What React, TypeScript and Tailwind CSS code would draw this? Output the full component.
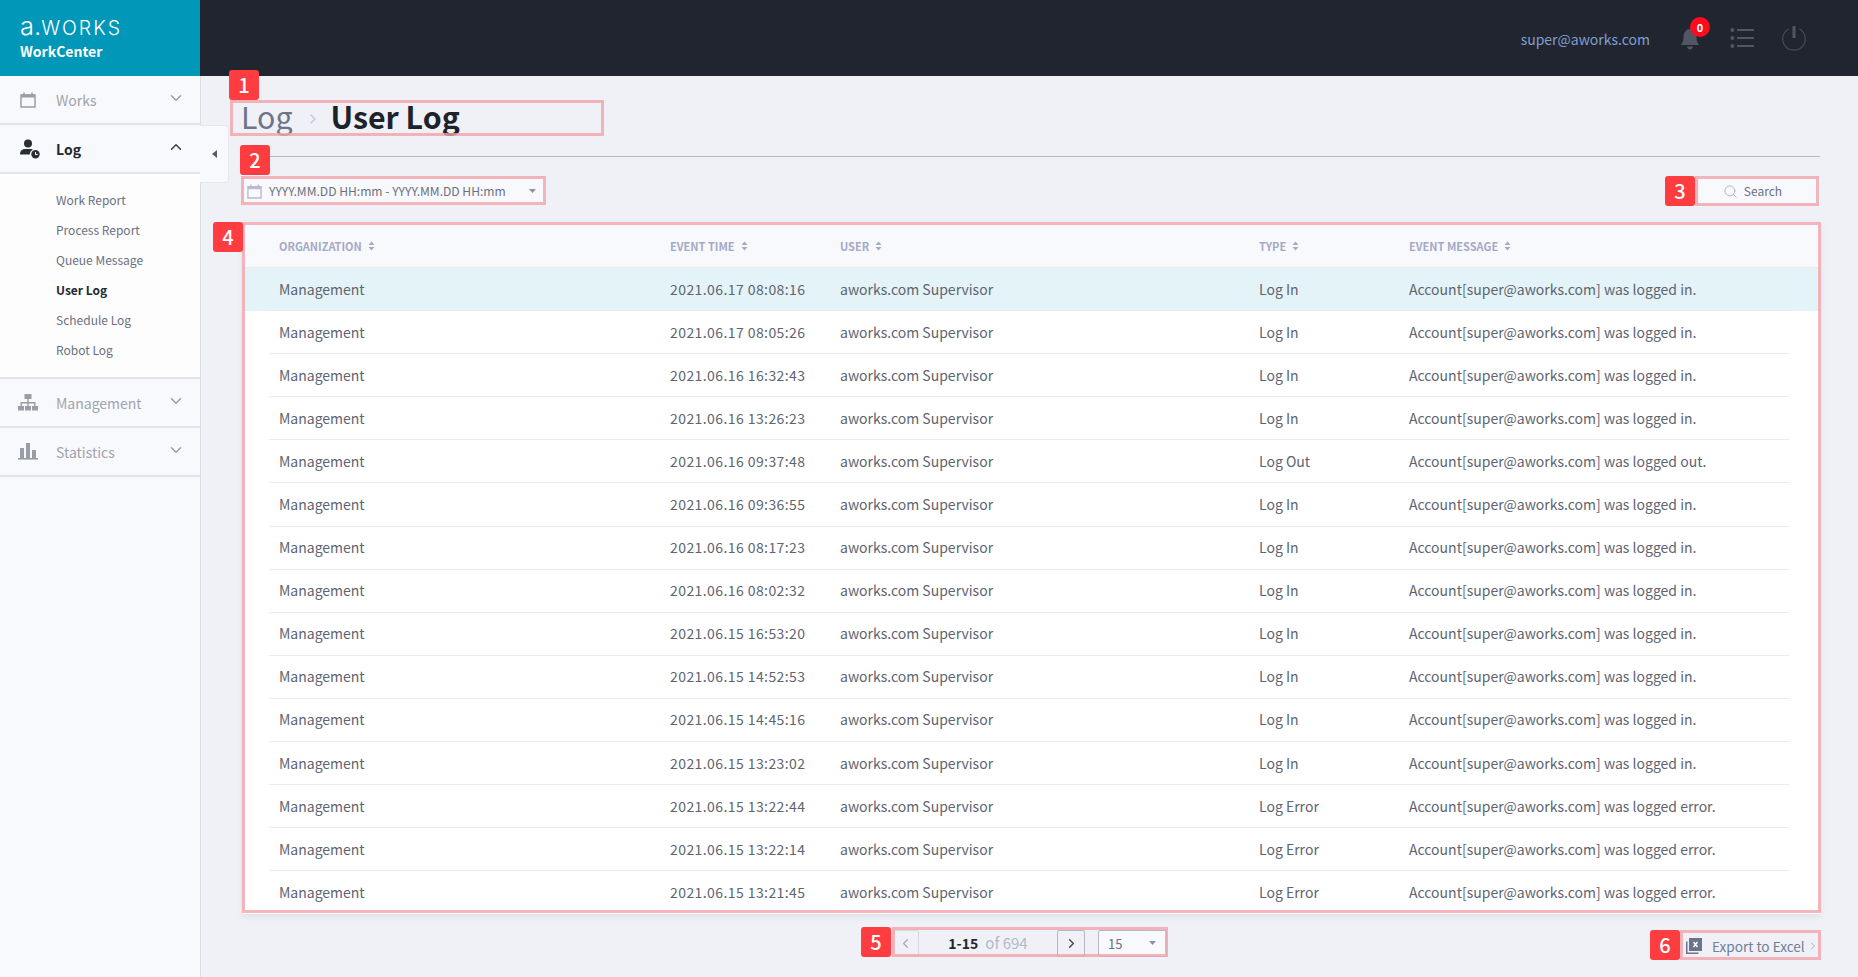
import React from "react";
import { ChevronDown, ChevronUp, ChevronLeft, ChevronRight, Search } from "lucide-react";

const FONT = '"Noto Sans CJK KR", "Noto Sans", sans-serif';

const rows: [string, string, string][] = [
  ["2021.06.17 08:08:16", "Log In", "logged in."],
  ["2021.06.17 08:05:26", "Log In", "logged in."],
  ["2021.06.16 16:32:43", "Log In", "logged in."],
  ["2021.06.16 13:26:23", "Log In", "logged in."],
  ["2021.06.16 09:37:48", "Log Out", "logged out."],
  ["2021.06.16 09:36:55", "Log In", "logged in."],
  ["2021.06.16 08:17:23", "Log In", "logged in."],
  ["2021.06.16 08:02:32", "Log In", "logged in."],
  ["2021.06.15 16:53:20", "Log In", "logged in."],
  ["2021.06.15 14:52:53", "Log In", "logged in."],
  ["2021.06.15 14:45:16", "Log In", "logged in."],
  ["2021.06.15 13:23:02", "Log In", "logged in."],
  ["2021.06.15 13:22:44", "Log Error", "logged error."],
  ["2021.06.15 13:22:14", "Log Error", "logged error."],
  ["2021.06.15 13:21:45", "Log Error", "logged error."],
];

const Sort = () => (
  <svg width="7" height="10" viewBox="0 0 7 10" className="ml-[6px]" fill="#a4a9c6">
    <path d="M3.5 0.5 6.5 4H0.5z" />
    <path d="M3.5 9.5 0.5 6H6.5z" />
  </svg>
);

const CalendarIcon = ({ color, size }: { color: string; size: number }) => (
  <svg width={size} height={size} viewBox="0 0 16 16" fill="none">
    <path d="M1 3h14v12H1z" stroke={color} strokeWidth="1.5" />
    <path d="M1 2.5h14v3H1z" fill={color} />
    <path d="M4 0.5v3M12 0.5v3" stroke={color} strokeWidth="1.5" />
  </svg>
);

const UserClock = () => (
  <svg width="20" height="20" viewBox="0 0 20 20" className="ml-[5px]">
    <circle cx="8" cy="4.6" r="4" fill="#2a2e38" />
    <path d="M0 15.5c0-4 2.500-5.500 5-5.500h6c1 0 1.500.2 2 .5-2 1-3.200 2.800-3.200 5z" fill="#2a2e38" />
    <circle cx="15.500" cy="15.200" r="4.200" fill="#2a2e38" />
    <path d="M15.500 13v2.500h2.200" stroke="#fff" strokeWidth="1" fill="none" />
  </svg>
);

const SitemapIcon = () => (
  <svg width="20" height="17" viewBox="0 0 20 17" fill="#9a9ca6">
    <rect x="6.500" y="0" width="7" height="5" />
    <rect x="0" y="12" width="6" height="4.500" />
    <rect x="7" y="12" width="6" height="4.500" />
    <rect x="14" y="12" width="6" height="4.500" />
    <path d="M9.300 5h1.400v3h6.800v4h-1.400V9.400h-5.400V12H9.300V9.400H3.900V12H2.500V8h6.800z" />
  </svg>
);

const BarsIcon = () => (
  <svg width="20" height="17" viewBox="0 0 20 17" fill="#9a9ca6">
    <rect x="2" y="5" width="4" height="10" />
    <rect x="8" y="0" width="4" height="15" />
    <rect x="14" y="7" width="4" height="8" />
    <rect x="0" y="15" width="20" height="1.600" />
  </svg>
);

const SideRow = ({
  icon,
  label,
  open,
  active,
}: {
  icon: React.ReactNode;
  label: string;
  open?: boolean;
  active?: boolean;
}) => (
  <div className="flex h-[49px] items-center border-b-2 border-[#e3e4ea] bg-[#f8f9fc]">
    <div className="flex w-[56px] shrink-0 justify-center pr-[1px]">{icon}</div>
    <span className={active ? "flex-1 pt-[2px] text-[14px] font-bold text-[#23272f]" : "flex-1 pt-[2px] text-[14px] text-[#a1a3ad]"}>
      {label}
    </span>
    {open ? (
      <ChevronUp size={18} strokeWidth={2} className="mr-[15px] mb-[3px] text-[#3a3e48]" />
    ) : (
      <ChevronDown size={18} strokeWidth={2} className="mr-[15px] mb-[3px] text-[#9a9ca6]" />
    )}
  </div>
);

const Badge = ({ n, x, y }: { n: number; x: number; y: number }) => (
  <div
    className="absolute flex h-[30px] w-[30px] items-center justify-center rounded-[3px] bg-[#ff3d41] text-[20px] font-medium leading-[24px] text-white"
    style={{ left: x, top: y }}
  >
    {n}
  </div>
);

const Box = ({ l, t, r, b }: { l: number; t: number; r: number; b: number }) => (
  <div
    className="pointer-events-none absolute border-[3px] border-[#f2a3aa]/80"
    style={{ left: l, top: t, width: r - l, height: b - t }}
  />
);

export default function App() {
  return (
    <div className="relative h-[977px] w-full overflow-hidden bg-[#eff1f6] text-[14px]" style={{ fontFamily: FONT }}>
      <header className="flex h-[76px] items-center bg-[#21252f]">
        <div className="flex h-full w-[200px] flex-col bg-[#0097b8] pl-[20px] pt-[14px] text-white">
          <div className="h-[24px] text-[25.500px] font-light leading-[24px]" style={{ fontFamily: "Inter, sans-serif" }}>
            <span>a.</span>
            <span className="text-[19.500px] uppercase tracking-[2px]">works</span>
          </div>
          <div className="mt-[2px] text-[14px] font-bold leading-[22px]">WorkCenter</div>
        </div>
        <div className="flex flex-1 items-center justify-end pr-[51px]">
          <span className="mt-[2px] text-[14px] text-[#7f9fcf]">super@aworks.com</span>
          <div className="relative ml-[29px] h-[26px] w-[22px]">
            <svg width="22" height="26" viewBox="0 0 22 26" fill="#525662">
              <path d="M2 20c0-1 2.500-2 2.500-8C4.500 7 7.500 4 11 4s6.500 3 6.500 8c0 6 2.500 7 2.500 8z" />
              <path d="M8 21.500h6c0 1.500-1.300 3-3 3s-3-1.500-3-3z" />
            </svg>
            <span className="absolute left-[11px] top-[-8px] flex h-[20px] w-[20px] items-center justify-center rounded-full bg-[#ff0a1e] text-[11px] font-bold text-white">
              0
            </span>
          </div>
          <svg width="24" height="22" viewBox="0 0 24 22" className="ml-[29px]" fill="#525662">
            <circle cx="2.300" cy="3" r="2" />
            <circle cx="2.300" cy="11" r="2" />
            <circle cx="2.300" cy="19" r="2" />
            <rect x="7" y="2" width="17" height="2" />
            <rect x="7" y="10" width="17" height="2" />
            <rect x="7" y="18" width="17" height="2" />
          </svg>
          <svg width="26" height="26" viewBox="0 0 26 26" className="ml-[27px]" fill="none">
            <path d="M7.500 4a11.300 11.300 0 1 0 11 0" stroke="#474b57" strokeWidth="1.200" />
            <path d="M13 1v12" stroke="#525662" strokeWidth="3" />
          </svg>
        </div>
      </header>

      <div className="flex h-[901px]">
        <aside className="relative w-[201px] shrink-0 border-r border-[#dcdde6] bg-[#f8f9fc]">
          <SideRow icon={<CalendarIcon color="#9a9ca6" size={16} />} label="Works" />
          <SideRow icon={<UserClock />} label="Log" open active />
          <div className="flex h-[205px] flex-col gap-0 border-b-2 border-[#e3e4ea] bg-[#fdfdfe] pl-[56px] pt-[11px] text-[12px] text-[#6b7080]">
            <div className="flex h-[30px] items-center">Work Report</div>
            <div className="flex h-[30px] items-center">Process Report</div>
            <div className="flex h-[30px] items-center">Queue Message</div>
            <div className="flex h-[30px] items-center font-bold text-[#23272f]">User Log</div>
            <div className="flex h-[30px] items-center">Schedule Log</div>
            <div className="flex h-[30px] items-center">Robot Log</div>
          </div>
          <SideRow icon={<SitemapIcon />} label="Management" />
          <SideRow icon={<BarsIcon />} label="Statistics" />
          <div className="absolute left-[200px] top-[49px] flex h-[58px] w-[29px] items-center justify-center rounded-r-[4px] border border-l-0 border-[#e6e7ee] bg-[#f8f9fc]">
            <svg width="5" height="8" viewBox="0 0 5 8" fill="#555a66">
              <path d="M5 0v8L0 4z" />
            </svg>
          </div>
        </aside>

        <main className="flex-1 pl-[42px] pr-[40px]">
          <div className="flex h-[60px] items-center pt-[20px]">
            <span className="ml-[-2px] text-[30.300px] font-normal leading-[30px] text-[#6e7489]">Log</span>
            <ChevronRight size={16} className="ml-[12px] mr-[10px] mt-[5px] text-[#c3c5cf]" />
            <span className="text-[30.300px] font-bold leading-[30px] text-[#1e222c]">User Log</span>
          </div>
          <div className="mt-[20px] h-px bg-[#b5b7c9]" />
          <div className="mt-[21px] flex h-[26px] items-center justify-between">
            <div className="ml-[1px] flex h-[26px] w-[302px] items-center bg-[#f8f9fc] pl-[3px] text-[12.100px] text-[#6b7080]">
              <CalendarIcon color="#b9bbcc" size={15} />
              <span className="ml-[7px] flex-1">YYYY.MM.DD HH:mm - YYYY.MM.DD HH:mm</span>
              <svg width="7" height="4" viewBox="0 0 7 4" className="mr-[10px]" fill="#8c90a8">
                <path d="M0 0h7L3.500 4z" />
              </svg>
            </div>
            <div className="flex h-[26px] w-[121px] items-center justify-center bg-[#f8f9fc] pr-[14px] text-[12px] text-[#6b7080]">
              <Search size={15} strokeWidth={1.300} className="mr-[6px] text-[#a4a6b4]" />
              Search
            </div>
          </div>

          <div className="mt-[18px] w-[1577px] bg-white shadow-[0_2px_6px_rgba(120,125,150,0.15)]">
            <div className="flex h-[46px] items-center border-b border-[#e8ebf0] bg-[#f8f9fd] pl-[36px] pt-[3px] text-[11px] font-bold text-[#a4a9c6]">
              <div className="flex w-[391px] items-center">ORGANIZATION<Sort /></div>
              <div className="flex w-[170px] items-center">EVENT TIME<Sort /></div>
              <div className="flex w-[419px] items-center">USER<Sort /></div>
              <div className="flex w-[150px] items-center">TYPE<Sort /></div>
              <div className="flex items-center">EVENT MESSAGE<Sort /></div>
            </div>
            {rows.map((r, i) => (
              <div key={r[0]} className={i === 0 ? "bg-[#e3f3f7] pl-[26px] pr-[31px]" : "pl-[26px] pr-[31px]"}>
                <div
                  className={
                    "flex h-[43.100px] items-center pl-[10px] text-[14px] text-[#5e6470] " +
                    (i < 14 ? "border-b border-[#e9ebef]" : "")
                  }
                >
                  <div className="w-[391px]">Management</div>
                  <div className="w-[170px] tracking-[0.42px]">{r[0]}</div>
                  <div className="w-[419px]">aworks.com Supervisor</div>
                  <div className="w-[150px]">{r[1]}</div>
                  <div>Account[super@aworks.com] was {r[2]}</div>
                </div>
              </div>
            ))}
          </div>

          <div className="relative mt-[16px] flex h-[26px] items-center">
            <div className="ml-[648px] flex h-[27px] w-[28px] items-center justify-center rounded-[2px] border border-[#d8d9e2]">
              <ChevronLeft size={15} className="text-[#a8aab6]" />
            </div>
            <div className="flex w-[138px] items-baseline justify-center text-[14px]">
              <span className="font-bold text-[#23272f]">1-15</span>
              <span className="ml-[7px] text-[15px] text-[#b5b8c6]">of 694</span>
            </div>
            <div className="flex h-[27px] w-[28px] items-center justify-center rounded-[2px] border border-[#b5b7c9]">
              <ChevronRight size={15} strokeWidth={2.500} className="text-[#4a4e5a]" />
            </div>
            <div className="ml-[13px] flex h-[27px] w-[69px] items-center justify-between rounded-[2px] border border-[#b5b7c9] bg-[#f8f9fc] pl-[9px] pr-[10px] text-[13px] text-[#6b7080]">
              15
              <svg width="7" height="4" viewBox="0 0 7 4" fill="#8c90a8">
                <path d="M0 0h7L3.500 4z" />
              </svg>
            </div>
            <div className="ml-auto mt-[5px] flex h-[26px] w-[137px] items-center whitespace-nowrap text-[13.600px] text-[#6f7f97]">
              <svg width="16" height="16" viewBox="0 0 16 16" className="ml-[3px] shrink-0">
                <path d="M0 3.500h1.500V14.500H12.500V16H0z" fill="#6b7488" />
                <rect x="3" y="0" width="13" height="13" fill="#6b7488" />
                <path d="M7.500 4l4 5M11.500 4l-4 5" stroke="#fff" strokeWidth="1.400" />
              </svg>
              <span className="ml-[10px]">Export to Excel</span>
              <ChevronRight size={12} className="ml-[2px] shrink-0 text-[#a8aab6]" />
            </div>
          </div>
        </main>
      </div>

      <Box l={230} t={100} r={604} b={136} />
      <Box l={241} t={176} r={546} b={205} />
      <Box l={1695} t={176} r={1819} b={206} />
      <Box l={242} t={222} r={1821} b={913} />
      <Box l={892} t={927} r={1168} b={957} />
      <Box l={1680} t={930} r={1821} b={960} />
      <Badge n={1} x={229} y={70} />
      <Badge n={2} x={240} y={145} />
      <Badge n={3} x={1665} y={176} />
      <Badge n={4} x={213} y={222} />
      <Badge n={5} x={861} y={927} />
      <Badge n={6} x={1650} y={930} />
    </div>
  );
}
